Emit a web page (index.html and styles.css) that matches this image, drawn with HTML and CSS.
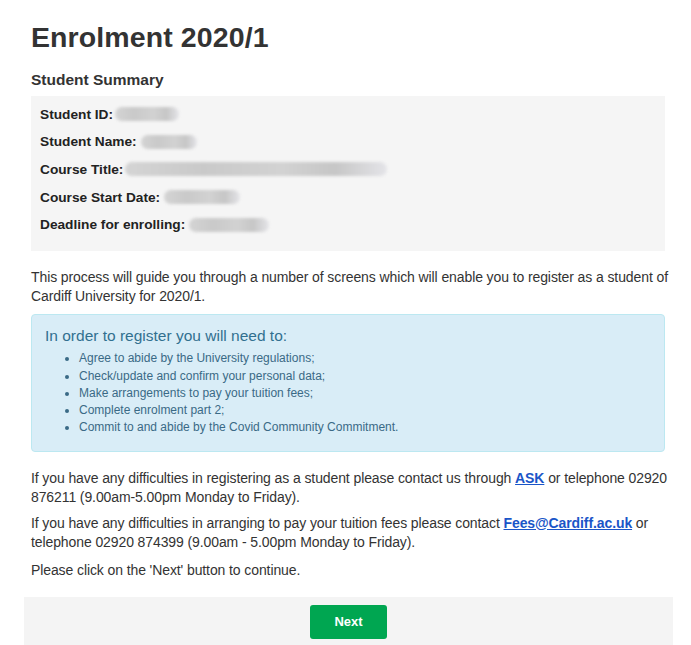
FILE: index.html
```html
<!DOCTYPE html>
<html lang="en">
<head>
<meta charset="utf-8">
<title>Enrolment 2020/1</title>
<link rel="stylesheet" href="styles.css">
</head>
<body>
<div class="page">
  <h1 class="title">Enrolment 2020/1</h1>
  <h2 class="subtitle">Student Summary</h2>
  <div class="summary">
    <div class="row"><span class="label">Student ID:</span><span class="blur w-id"></span></div>
    <div class="row"><span class="label">Student Name:</span><span class="blur w-name"></span></div>
    <div class="row"><span class="label">Course Title:</span><span class="blur w-course"></span></div>
    <div class="row"><span class="label">Course Start Date:</span><span class="blur w-start"></span></div>
    <div class="row"><span class="label">Deadline for enrolling:</span><span class="blur w-deadline"></span></div>
  </div>
  <p class="text intro">This process will guide you through a number of screens which will enable you to register as a student of Cardiff University for 2020/1.</p>
  <div class="info">
    <div class="info-title">In order to register you will need to:</div>
    <ul class="info-list">
      <li>Agree to abide by the University regulations;</li>
      <li>Check/update and confirm your personal data;</li>
      <li>Make arrangements to pay your tuition fees;</li>
      <li>Complete enrolment part 2;</li>
      <li>Commit to and abide by the Covid Community Commitment.</li>
    </ul>
  </div>
  <p class="text">If you have any difficulties in registering as a student please contact us through <a class="link" href="#">ASK</a> or telephone 02920 876211 (9.00am-5.00pm Monday to Friday).</p>
  <p class="text">If you have any difficulties in arranging to pay your tuition fees please contact <a class="link" href="#">Fees@Cardiff.ac.uk</a> or telephone 02920 874399 (9.00am - 5.00pm Monday to Friday).</p>
  <p class="text last">Please click on the 'Next' button to continue.</p>
  <div class="footer">
    <button class="btn" type="button">Next</button>
  </div>
</div>
</body>
</html>
```
FILE: styles.css
```css
html, body {
  margin: 0;
  padding: 0;
  background: #ffffff;
}
body {
  font-family: "Liberation Sans", Arial, sans-serif;
  color: #333333;
}
.page {
  width: 634px;
  padding-left: 31px;
  padding-top: 19px;
}
.title {
  margin: 0;
  font-size: 28.5px;
  line-height: 36px;
  font-weight: bold;
  color: #333333;
  letter-spacing: 0.1px;
}
.subtitle {
  margin: 14px 0 0 0;
  font-size: 15.5px;
  line-height: 22px;
  font-weight: bold;
  color: #333333;
}
.summary {
  margin-top: 5px;
  background: #f5f5f5;
  padding: 8px 9px 9px 9px;
}
.row {
  display: flex;
  align-items: center;
  height: 20px;
  margin-bottom: 7.7px;
  font-size: 13.7px;
}
.label {
  font-weight: bold;
  color: #222222;
}
.blur {
  display: inline-block;
  height: 14px;
  margin-left: 2px;
  border-radius: 7px;
  filter: blur(1.5px);
  background: linear-gradient(90deg, #d4d4d4 0%, #c9c9c9 30%, #d2d2d2 60%, #c6c6c6 80%, #e4e4e8 100%);
}
.w-id { width: 64px; }
.w-name { width: 56px; margin-left: 4px; }
.w-course { width: 262px; }
.w-start { width: 76px; margin-left: 4px; }
.w-deadline { width: 80px; margin-left: 4px; }
.text {
  margin: 0 -8px 7px 0;
  font-size: 14px;
  line-height: 19px;
  letter-spacing: -0.1px;
  color: #333333;
}
.intro {
  margin-top: 17px;
  margin-bottom: 8px;
}
.info {
  margin: 8px 0 17px 0;
  background: #d9edf7;
  border: 1px solid #bce8f1;
  border-radius: 4px;
  padding: 11px 13px 14px 13px;
  color: #31708f;
}
.info-title {
  font-size: 15.5px;
  line-height: 20px;
}
.info-list {
  margin: 4px 0 0 0;
  padding-left: 34px;
  font-size: 12px;
  line-height: 17.25px;
  color: #3a6a86;
}
.link {
  color: #1a55c8;
  font-weight: bold;
  text-decoration: underline;
}
.last {
  margin-top: 9px;
  margin-bottom: 17px;
}
.footer {
  margin: 0 -8px 0 -7px;
  background: #f4f4f4;
  padding: 8px 0 10px 0;
  display: flex;
  justify-content: center;
}
.btn {
  width: 77px;
  height: 34px;
  border: none;
  border-radius: 3px;
  background: #00a651;
  color: #ffffff;
  font-family: "Liberation Sans", Arial, sans-serif;
  font-weight: bold;
  font-size: 13px;
  cursor: pointer;
}
```
